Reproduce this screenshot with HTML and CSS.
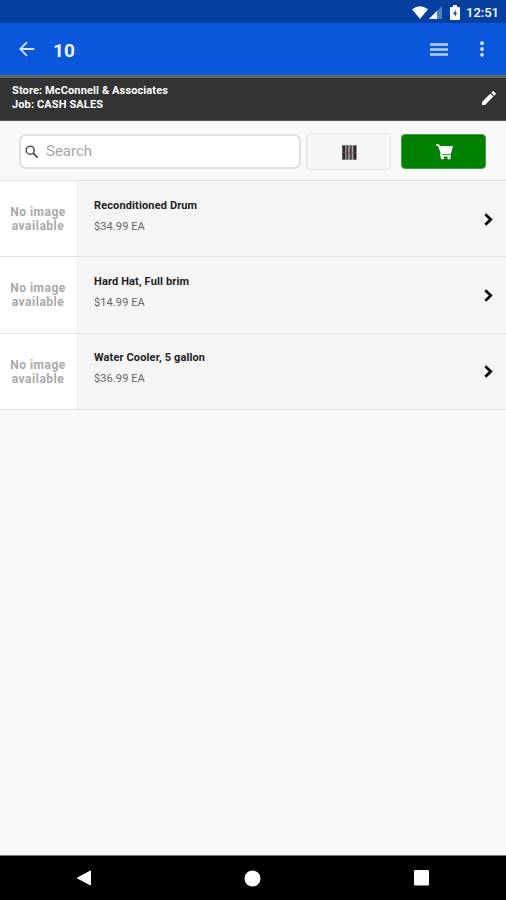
FILE: index.html
```html
<!DOCTYPE html>
<html lang="en">

<head>
    <meta charset="UTF-8">
    <meta name="viewport" content="width=device-width, initial-scale=1.0">
    <title>Products</title>
    <link rel="stylesheet" href="styles.css">
</head>

<body>
    <div class="status-bar">
        <svg class="wifi" width="16" height="13" viewBox="0 0 17 14">
            <path d="M0 3.5Q8.5 -3 17 3.5L8.5 14Z" fill="#fff"/>
        </svg>
        <svg class="signal" width="13" height="13" viewBox="0 0 14 14">
            <path d="M14 0V14H0Z" fill="#4f7fc4"/>
            <path d="M8.5 5.5V14H0Z" fill="#fff"/>
        </svg>
        <svg class="battery" width="10" height="15" viewBox="0 0 10 15">
            <path d="M3 0h4v2h2q1 0 1 1v11q0 1-1 1H1q-1 0-1-1V3q0-1 1-1h2z" fill="#fff"/>
            <path d="M5.6 4.5L3.2 9h1.6v3L7 8H5.6z" fill="#0540a0"/>
        </svg>
        <span class="clock">12:51</span>
    </div>

    <header class="app-bar">
        <svg class="back" width="16" height="16" viewBox="0 0 16 16">
            <path d="M15.3 8H1.5M8 1.2L1.2 8L8 14.8" fill="none" stroke="#d5e2ff" stroke-width="1.8"/>
        </svg>
        <h1>10</h1>
        <svg class="menu" width="18" height="13" viewBox="0 0 18 13">
            <path d="M0 1.5h18M0 6.5h18M0 11.5h18" stroke="#b9cff8" stroke-width="2.4"/>
        </svg>
        <svg class="more" width="4" height="16" viewBox="0 0 4 16">
            <circle cx="2" cy="2.2" r="1.9" fill="#d5e2ff"/>
            <circle cx="2" cy="8" r="1.9" fill="#d5e2ff"/>
            <circle cx="2" cy="13.8" r="1.9" fill="#d5e2ff"/>
        </svg>
    </header>

    <div class="job-bar">
        <div class="job-info">
            <div class="store">Store: McConnell &amp; Associates</div>
            <div class="job">Job: CASH SALES</div>
        </div>
        <svg class="edit" width="14" height="14" viewBox="0 0 14 14">
            <path d="M0 14V11L8.4 2.6l3 3L3 14zM9.3 1.7L10.6 .4q.6-.6 1.2 0l1.8 1.8q.6.6 0 1.2L12.3 4.7z" fill="#fff"/>
        </svg>
    </div>

    <div class="toolbar">
        <label class="search">
            <svg width="14" height="14" viewBox="0 0 14 14">
                <circle cx="5.2" cy="5.2" r="4" fill="none" stroke="#555" stroke-width="1.6"/>
                <path d="M8 8l4.6 4.6" stroke="#555" stroke-width="2"/>
            </svg>
            <input type="text" placeholder="Search">
        </label>
        <button class="scan-button" aria-label="Scan">
            <svg width="15" height="15" viewBox="0 0 15 15">
                <rect width="15" height="15" fill="#aaa"/>
                <path d="M1.8 .5v14M12.8 .5v14" stroke="#2b2b2b" stroke-width="2.8"/>
                <path d="M5.3 .5v14M8.8 .5v14" stroke="#444" stroke-width="2"/>
                <path d="M1 7.5h13" stroke="#a33d48" stroke-opacity=".7"/>
            </svg>
        </button>
        <button class="cart-button" aria-label="Cart">
            <svg width="17" height="16" viewBox="0 0 17 16">
                <path d="M0 .2h3l.8 1.8H17l-2 7.3-.6 1H6l-.3.8H15v1.4H3.8L4.6 9 2 1.7H0z" fill="#fff"/>
                <circle cx="6.4" cy="13.8" r="1.7" fill="#fff"/>
                <circle cx="13" cy="13.8" r="1.7" fill="#fff"/>
            </svg>
        </button>
    </div>

    <div class="product-list">
        <div class="product">
            <div class="no-image">No image<br>available</div>
            <div class="details">
                <div class="name">Reconditioned Drum</div>
                <div class="price">$34.99 EA</div>
            </div>
            <svg class="chevron" width="9" height="13" viewBox="0 0 9 13">
                <path d="M1.3 1.2L6.8 6.5L1.3 11.8" fill="none" stroke="#000" stroke-width="2.6"/>
            </svg>
        </div>
        <div class="product">
            <div class="no-image">No image<br>available</div>
            <div class="details">
                <div class="name">Hard Hat, Full brim</div>
                <div class="price">$14.99 EA</div>
            </div>
            <svg class="chevron" width="9" height="13" viewBox="0 0 9 13">
                <path d="M1.3 1.2L6.8 6.5L1.3 11.8" fill="none" stroke="#000" stroke-width="2.6"/>
            </svg>
        </div>
        <div class="product">
            <div class="no-image">No image<br>available</div>
            <div class="details">
                <div class="name">Water Cooler, 5 gallon</div>
                <div class="price">$36.99 EA</div>
            </div>
            <svg class="chevron" width="9" height="13" viewBox="0 0 9 13">
                <path d="M1.3 1.2L6.8 6.5L1.3 11.8" fill="none" stroke="#000" stroke-width="2.6"/>
            </svg>
        </div>
    </div>

    <nav class="nav-bar">
        <svg width="16" height="16" viewBox="0 0 16 16">
            <path d="M14.5 1v14L1.3 8z" fill="#fff" stroke="#fff" stroke-linejoin="round"/>
        </svg>
        <svg width="17" height="17" viewBox="0 0 17 17">
            <circle cx="8.5" cy="8.5" r="8" fill="#fff"/>
        </svg>
        <svg width="15" height="16" viewBox="0 0 15 16">
            <rect width="15" height="15.5" rx="1" fill="#fff"/>
        </svg>
    </nav>
</body>

</html>
```

FILE: styles.css
```css
* {
    box-sizing: border-box;
}

body {
    margin: 0;
    height: 100vh;
    display: flex;
    flex-direction: column;
    font-family: Roboto, "Liberation Sans", sans-serif;
    background-color: #f9f9f9;
}

svg {
    display: block;
    flex-shrink: 0;
}

.status-bar {
    height: 23px;
    display: flex;
    align-items: center;
    justify-content: flex-end;
    padding: 1px 7px 0 0;
    background-color: #0540a0;
}

.wifi {
    margin-right: 1px;
}

.signal {
    margin-top: 1px;
    margin-right: 8px;
}

.battery {
    margin-right: 6px;
}

.clock {
    width: 33px;
    padding-top: 1px;
    color: #fff;
    font-size: 13px;
    font-weight: 500;
    line-height: 20px;
    white-space: nowrap;
}

.app-bar {
    height: 52px;
    display: flex;
    align-items: center;
    padding: 0 22px 0 19px;
    background-color: #0b57dc;
}

.app-bar h1 {
    flex: 1;
    margin: 2px 0 0 18px;
    color: #eef3ff;
    font-size: 19px;
    font-weight: 700;
}

.menu {
    margin-right: 32px;
}

.job-bar {
    height: 46px;
    display: flex;
    align-items: center;
    justify-content: space-between;
    padding: 0 10px 0 12px;
    background-color: #333;
    border-top: 3px solid #666;
    border-bottom: 1px solid #555;
}

.job-info {
    margin-top: -3px;
    color: #fff;
    font-size: 11px;
    font-weight: 700;
    line-height: 14px;
    letter-spacing: 0.12px;
}

.edit {
    margin-top: -2px;
}

.toolbar {
    height: 60px;
    display: flex;
    align-items: center;
    padding: 2px 20px 0 19px;
    border-bottom: 1px solid #e2e2e2;
}

.search {
    width: 283px;
    height: 35px;
    display: flex;
    align-items: center;
    padding-left: 4px;
    background-color: #fff;
    border: 2px solid #e0e0e0;
    border-radius: 7px;
}

.search input {
    width: 220px;
    margin-left: 7px;
    padding: 0 0 1px;
    border: none;
    outline: none;
    font-family: inherit;
    font-size: 15px;
    line-height: 20px;
}

.search input::placeholder {
    color: #a5a5a5;
}

.scan-button,
.cart-button {
    width: 85px;
    height: 35px;
    display: flex;
    align-items: center;
    justify-content: center;
    padding: 0;
    border-radius: 4px;
}

.scan-button {
    height: 37px;
    margin-left: 5px;
    padding: 1px 0 0 1px;
    background-color: #f6f6f6;
    border: 1px solid #e4e4e4;
}

.cart-button {
    margin-left: 10px;
    padding-left: 1px;
    background-color: #008000;
    border: 1px solid #3f9f3f;
}

.product {
    height: 76px;
    display: flex;
    background-color: #f5f5f5;
    border-bottom: 1px solid #e2e2e2;
}

.product:nth-child(2) {
    height: 77px;
}

.no-image {
    width: 76px;
    padding-top: 24px;
    background-color: #fff;
    color: #a9a9a9;
    font-size: 12px;
    font-weight: 700;
    line-height: 14px;
    letter-spacing: 0.5px;
    text-align: center;
}

.details {
    flex: 1;
    padding: 18px 0 0 18px;
}

.product:nth-child(3) .details {
    padding-top: 17px;
}

.name {
    color: #222;
    font-size: 11px;
    font-weight: 700;
    line-height: 14px;
    letter-spacing: 0.13px;
}

.price {
    margin-top: 7px;
    color: #666;
    font-size: 11px;
    line-height: 14px;
    letter-spacing: 0.1px;
}

.chevron {
    margin: 32px 13px 0 0;
}

.product:nth-child(3) .chevron {
    margin-top: 31px;
}

.nav-bar {
    height: 45px;
    display: grid;
    grid-template-columns: repeat(3, 1fr);
    align-items: center;
    justify-items: center;
    margin-top: auto;
    background-color: #000;
    border-top: 1px solid #777;
}
```
